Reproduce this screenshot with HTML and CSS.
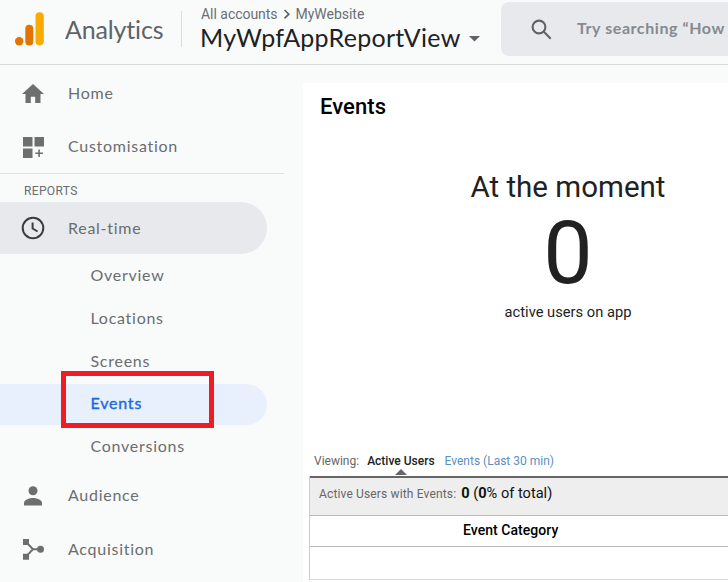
FILE: index.html
```html
<!DOCTYPE html>
<html lang="en">
<head>
<meta charset="utf-8">
<title>Analytics</title>
<link rel="stylesheet" href="styles.css">
</head>
<body>
<header class="header">
  <svg class="logo" width="30" height="34" viewBox="0 0 30 34"><circle cx="4.2" cy="29.2" r="4.2" fill="#e37400"/><rect x="10.3" y="12.7" width="8" height="20.7" rx="4" fill="#e37400"/><rect x="20.5" y="0.3" width="8.3" height="33.1" rx="4.1" fill="#f9ab00"/></svg>
  <span class="brand">Analytics</span>
  <div class="account">
    <div class="crumbs"><span>All accounts</span><svg width="18" height="16" viewBox="0 0 18 16"><path d="M6.5 4l4.3 4.2-4.3 4.2" fill="none" stroke="#5f6368" stroke-width="1.7"/></svg><span>MyWebsite</span></div>
    <div class="view"><span>MyWpfAppReportView</span><svg width="12" height="6" viewBox="0 0 12 6"><path d="M0 0h11L5.500 5.500z" fill="#5f6368"/></svg></div>
  </div>
  <div class="search">
    <svg width="22" height="22" viewBox="0 0 22 22" fill="none" stroke="#5f6368" stroke-width="2.100"><circle cx="8" cy="8" r="6.400"/><path d="M12.600 12.600l7.100 7.100"/></svg>
    <span>Try searching “How</span>
  </div>
</header>
<div class="body">
  <nav class="sidebar">
    <div class="item"><svg class="icon" viewBox="0 0 24 24"><path d="M9.800 21v-6.300h4.400V21h5.300v-9h3.500L12 2 1 12h3.500v9z"/></svg><span class="label-up">Home</span></div>
    <div class="item"><svg class="icon" viewBox="0 0 24 24"><path d="M2 2h9.500v9.500H2zM13.500 2H23v9.500h-9.500zM2 13.500h9.500V23H2zM17.300 14.500h1.600v3h3v1.600h-3v3h-1.600v-3h-3v-1.600h3z"/></svg><span class="label-up">Customisation</span></div>
    <div class="section">REPORTS</div>
    <div class="item current"><svg class="icon clock" viewBox="0 0 24 24"><circle cx="12" cy="12" r="10.300"/><path d="M11.600 6.500v6l5 3"/></svg><span>Real-time</span></div>
    <div class="sub"><span>Overview</span></div>
    <div class="sub"><span>Locations</span></div>
    <div class="sub"><span>Screens</span></div>
    <div class="sub selected"><span>Events</span><i class="callout"></i></div>
    <div class="sub"><span>Conversions</span></div>
    <div class="item tall"><svg class="icon" viewBox="0 0 24 24"><circle cx="12" cy="7.800" r="4.500"/><path d="M3 22.500V20c0-3.400 5.500-5 9-5s9 1.600 9 5v2.500z"/></svg><span>Audience</span></div>
    <div class="item tall"><svg class="icon" viewBox="0 0 24 24"><path d="M2 2h6v6H2zM2 16.700h6v6H2z"/><circle cx="19.500" cy="12.300" r="3.500"/><path d="M5 5l7 7.300-7 7.300M12 12.300h7" fill="none" stroke="#6e6e6e" stroke-width="2"/></svg><span>Acquisition</span></div>
  </nav>
  <main class="card">
    <h1>Events</h1>
    <section class="counter">
      <div class="moment">At the moment</div>
      <div class="count">0</div>
      <div class="caption">active users on app</div>
    </section>
    <div class="tabs"><span class="viewing">Viewing:</span><b class="active">Active Users</b><a>Events (Last 30 min)</a></div>
    <div class="table">
      <div class="summary"><span class="label">Active Users with Events:</span><span class="total"><b class="mark">0</b> (<b>0</b>% of total)</span></div>
      <div class="heading"><span>Event Category</span></div>
      <div class="empty"></div>
    </div>
  </main>
</div>
</body>
</html>
```
FILE: styles.css
```css
* { box-sizing: border-box; }
body { margin: 0; width: 728px; height: 582px; overflow: hidden; background: #f9fbfa; font-family: Roboto, "Liberation Sans", sans-serif; color: #212121; }
svg { display: block; flex: none; }
span, b, a { white-space: nowrap; }

.header { display: flex; height: 65px; border-bottom: 1px solid #dadcdc; }
.logo { margin: 12px 0 0 15px; }
.brand { flex: none; width: 137px; height: 36px; margin-top: 11px; padding-left: 20px; border-right: 1px solid #dadce0; font: 25px/37px Lato, sans-serif; letter-spacing: -.15px; color: #5f6368; }
.account { flex: none; width: 319px; padding: 6px 0 0 19px; }
.crumbs { display: flex; height: 17px; font-size: 14px; line-height: 17px; letter-spacing: -.03px; color: #6b6e72; }
.view { display: flex; align-items: center; gap: 8px; height: 31px; margin-left: -1px; font: 25px/31px Lato, sans-serif; letter-spacing: .28px; color: #202124; }
.view span { margin-top: -2px; }
.search { display: flex; flex: 1; min-width: 0; height: 54px; margin-top: 2px; padding: 17px 0 0 30px; overflow: hidden; border-radius: 8px 0 0 8px; background: #e8e9ed; font: bold 16px/20px Lato, sans-serif; letter-spacing: .57px; color: #858a90; }
.search span { margin: -1px 0 0 24px; }

.body { display: flex; }
.sidebar { width: 303px; flex: none; padding-top: 2px; font: 16px/20px Lato, sans-serif; letter-spacing: .73px; color: #6b6d70; }
.item { display: flex; align-items: center; gap: 23px; height: 53px; padding-left: 21px; }
.label-up { padding-bottom: 2px; }
.icon { width: 24px; height: 24px; fill: #6e6e6e; }
.clock { fill: none; stroke: #3c3c40; stroke-width: 2; }
.section { width: 284px; height: 29px; padding: 8px 0 0 24px; border-top: 1px solid #e0e3e3; font: 12px/18px Roboto, sans-serif; letter-spacing: .35px; }
.current { width: 267px; height: 52px; border-radius: 0 26px 26px 0; background: #e8e9ed; }
.sub { display: flex; align-items: center; height: 43px; padding: 0 0 2px 90.5px; }
.selected { position: relative; width: 267px; height: 41px; margin-top: 1px; padding-bottom: 3px; border-radius: 0 21px 21px 0; background: #e8effd; color: #1a6be0; -webkit-text-stroke: .4px #1a6be0; letter-spacing: .8px; }
.callout { position: absolute; left: 61px; top: -13px; width: 153px; height: 57px; border: 5px solid #ee1c25; }
.tall { height: 54px; }

.card { width: 425px; height: 499px; margin-top: 18px; padding-top: 13px; background: #fff; }
h1 { margin: 0 0 0 17px; font-size: 22px; line-height: 22px; font-weight: 500; letter-spacing: .1px; color: #000; }
.counter { padding: 51px 0 0 105px; text-align: center; }
.moment { height: 36px; font-size: 29.5px; line-height: 36px; }
.count { height: 95px; font-size: 88px; line-height: 96px; }
.caption { font-size: 14.7px; line-height: 24px; }
.tabs { display: flex; height: 20px; margin: 127px 0 0 11px; font-size: 12px; line-height: 20px; color: #666; }
.tabs a { margin-left: 10px; color: #5a8fc2; }
.active { position: relative; margin-left: 8px; font-weight: 500; color: #222; }
.active::after { content: ""; position: absolute; left: 28px; top: 18px; border: 6px solid transparent; border-top: 0; border-bottom-color: #666; }
.table { margin: 5px 0 0 6px; border-left: 1px solid #ccc; }
.summary { display: flex; height: 40px; padding: 6px 0 0 9px; border-top: 2px solid #666; border-bottom: 1px solid #b8b8b8; background: #eee; line-height: 18px; }
.label { font-size: 12px; line-height: 20px; letter-spacing: .15px; color: #666; }
.total { margin-left: 5px; font-size: 14.6px; color: #111; }
.total b { font-weight: 700; }
.mark { background: #e6f3e6; }
.heading { height: 31px; padding-left: 153px; border-bottom: 1px solid #b8b8b8; font-size: 14px; line-height: 28px; font-weight: 500; letter-spacing: .05px; color: #000; }
.empty { height: 33px; border-bottom: 1px solid #d8d8d8; }
```
